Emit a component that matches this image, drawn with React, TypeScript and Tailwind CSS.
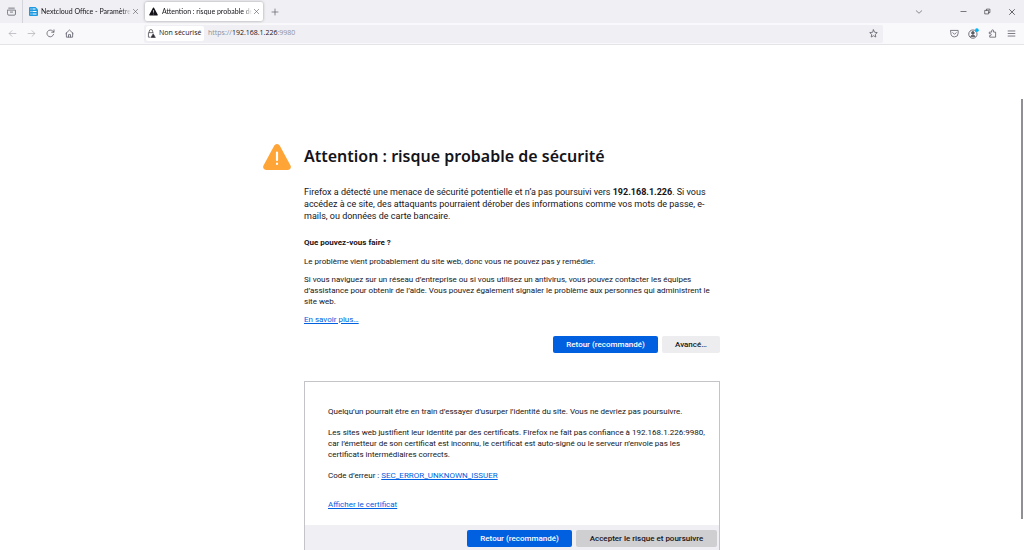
import type { ReactNode } from "react";

const iconPaths: Record<string, ReactNode> = {
  view: (
    <>
      <path d="M1 5.500h14v7a2 2 0 0 1-2 2H3a2 2 0 0 1-2-2z" />
      <path d="M3 2h10M6 9h4" />
    </>
  ),
  back: <path d="M14 8H2.500M7 3 2 8l5 5" />,
  forward: <path d="M2 8h11.500M9 3l5 5-5 5" />,
  reload: (
    <>
      <path d="M13.500 9.500A6 6 0 1 1 12 3.700L14 5.500" />
      <path d="M14.200 1.500v4.200H10" />
    </>
  ),
  home: (
    <>
      <path d="M1.500 8 8 1.800 14.500 8M2.500 7v7.500h11V7" />
      <path d="M6.200 14v-4h3.600v4" />
    </>
  ),
  plus: <path d="M8 2v12M2 8h12" />,
  close: <path d="m3 3 10 10M13 3 3 13" />,
  down: <path d="m2.500 5.500 5.500 5 5.500-5" />,
  minimize: <path d="M2 8h12" />,
  restore: (
    <>
      <path d="M2.500 5.500h8v8h-8z" />
      <path d="M5.500 5V2.500h8v8H11" />
    </>
  ),
  star: <path d="m8 1.500 2 4.300 4.700.6-3.500 3.200.9 4.700L8 12l-4.100 2.300.9-4.700L1.300 6.400 6 5.800z" />,
  pocket: (
    <>
      <path d="M1.500 2.500h13v5a6.500 6.500 0 0 1-13 0z" />
      <path d="m5 6.500 3 3 3-3" />
    </>
  ),
  puzzle: (
    <path d="M3 5.500h3.500V3.200a1.700 1.700 0 0 1 3.400 0v2.300h3.600v9H3v-3h1.200a1.600 1.600 0 0 0 0-3.200H3z" />
  ),
  menu: <path d="M2 3.500h12M2 8h12M2 12.500h12" />,
};

function Icon({ name, className = "size-[9px]" }: { name: string; className?: string }) {
  return (
    <svg
      viewBox="0 0 16 16"
      fill="none"
      stroke="currentColor"
      strokeWidth="1.4"
      strokeLinecap="round"
      strokeLinejoin="round"
      className={className}
    >
      {iconPaths[name]}
    </svg>
  );
}

function IconButton({ label, name, className }: { label: string; name: string; className?: string }) {
  return (
    <button aria-label={label} className="flex h-4 w-[19px] shrink-0 items-center justify-center">
      <Icon name={name} className={className} />
    </button>
  );
}

const tabTitle = "w-[90px] overflow-hidden whitespace-nowrap font-['Lato',sans-serif] text-[7px] mask-r-from-90%";

function TabStrip() {
  return (
    <div className="flex h-[23px] items-center bg-[#f0f0f4] text-[#5b5b66]">
      <div className="flex h-full w-[23px] items-center justify-center border-r border-[#d4d4dc]">
        <IconButton label="Firefox View" name="view" />
      </div>
      <div className="flex h-[19px] w-[118px] items-center pl-1.5">
        <svg viewBox="0 0 18 18" className="mr-[3px] size-[9px] shrink-0">
          <path d="M2 0h11l5 5v11a2 2 0 0 1-2 2H2a2 2 0 0 1-2-2V2a2 2 0 0 1 2-2z" fill="#1c99e0" />
          <path d="M3 3h2v2H3zM7 3h6v2H7zM3 8h2v2H3zM7 8h8v2H7zM3 13h2v2H3zM7 13h8v2H7z" fill="#fff" />
        </svg>
        <span className={`${tabTitle} text-[#15141a]`}>Nextcloud Office - Paramètres d</span>
        <button aria-label="Fermer l’onglet" className="flex w-2 shrink-0 justify-center">
          <Icon name="close" className="size-[7px]" />
        </button>
      </div>
      <div className="ml-1 flex h-[19px] w-[118px] items-center rounded-[2px] bg-white pl-1 shadow-[0_0_3px_rgba(0,0,0,0.35)]">
        <svg viewBox="0 0 16 16" className="mr-1 size-[9px] shrink-0">
          <path d="M8 1a1 1 0 0 1 .9.500l6.500 12A1 1 0 0 1 14.500 15h-13a1 1 0 0 1-.9-1.500l6.500-12A1 1 0 0 1 8 1z" fill="#15141a" />
          <path d="M8 5.500v4.500M8 12v1" stroke="#fff" strokeWidth="1.200" />
        </svg>
        <span className={`${tabTitle} text-[#15141a]`}>Attention : risque probable de s</span>
        <button aria-label="Fermer l’onglet" className="flex w-2 shrink-0 justify-center">
          <Icon name="close" className="size-[7px]" />
        </button>
      </div>
      <div className="ml-0.5">
        <IconButton label="Nouvel onglet" name="plus" className="size-2" />
      </div>
      <div className="mr-[26px] ml-auto">
        <IconButton label="Lister les onglets" name="down" className="size-2" />
      </div>
      <div className="flex gap-[5px] pr-[3px] text-[#2b2a33]">
        <IconButton label="Réduire" name="minimize" className="size-[7px]" />
        <IconButton label="Restaurer" name="restore" className="size-[7px]" />
        <IconButton label="Fermer" name="close" className="size-[8px]" />
      </div>
    </div>
  );
}

function NavBar() {
  return (
    <div className="flex h-[22px] items-center border-b border-[#e4e4e8] bg-[#f9f9fb] px-[3px] text-[#5b5b66]">
      <div className="flex text-[#b4b4ba]">
        <IconButton label="Précédent" name="back" />
        <IconButton label="Suivant" name="forward" />
      </div>
      <IconButton label="Actualiser" name="reload" />
      <IconButton label="Accueil" name="home" />
      <div className="mr-14 ml-[65px] flex h-[18px] grow items-center rounded-[2px] bg-[#f0f0f4]">
        <button className="ml-0.5 flex h-[15px] w-[58px] items-center gap-[3px] rounded-[2px] bg-white pl-px text-[7px] whitespace-nowrap text-[#15141a]">
          <svg viewBox="0 0 16 16" fill="none" stroke="#4a4a52" strokeWidth="1.400" className="size-[9px] shrink-0">
            <path d="M6 14.500H2.500v-8h9M4 6.500V4a3 3 0 0 1 6 0v2.500" />
            <path d="m11 8.500 3.800 6.500H7.200z" fill="#2b2a33" strokeLinejoin="round" />
          </svg>
          Non sécurisé
        </button>
        <a href="https://192.168.1.226:9980" className="ml-1 text-[7px] text-[#8f8f98]">
          https://<span className="text-[#15141a]">192.168.1.226</span>:9980
        </a>
        <div className="ml-auto">
          <IconButton label="Marquer cette page" name="star" />
        </div>
      </div>
      <div className="ml-1.5 flex">
        <IconButton label="Pocket" name="pocket" />
        <button aria-label="Compte" className="flex h-4 w-[19px] items-center justify-center">
          <svg viewBox="0 0 18 18" fill="none" stroke="currentColor" strokeWidth="1.400" className="size-[11px]">
            <circle cx="8" cy="10" r="6.800" />
            <circle cx="8" cy="8" r="2.200" fill="currentColor" />
            <path d="M4.500 14c0-3 7-3 7 0z" fill="currentColor" />
            <circle cx="14.500" cy="3.500" r="3" fill="#00b3f4" stroke="none" />
          </svg>
        </button>
        <IconButton label="Extensions" name="puzzle" />
        <IconButton label="Menu" name="menu" />
      </div>
    </div>
  );
}

const button = "h-[17px] rounded-[2px] text-[8px] font-medium whitespace-nowrap";
const link = "text-[#0060df] underline";

function CertificatePanel() {
  return (
    <section className="mt-7 border border-[#c4c4c8] text-[8px] leading-[11px] whitespace-nowrap">
      <div className="px-[23px] pt-6 pb-[15px]">
        <p>Quelqu’un pourrait être en train d’essayer d’usurper l’identité du site. Vous ne devriez pas poursuivre.</p>
        <p className="mt-2.5">
          Les sites web justifient leur identité par des certificats. Firefox ne fait pas confiance à 192.168.1.226:9980,
          <br />
          car l’émetteur de son certificat est inconnu, le certificat est auto-signé ou le serveur n’envoie pas les
          <br />
          certificats intermédiaires corrects.
        </p>
        <p className="mt-2.5">
          Code d’erreur : <a href="#code" className={link}>SEC_ERROR_UNKNOWN_ISSUER</a>
        </p>
        <p className="mt-[18px]">
          <a href="#certificat" className={link}>Afficher le certificat</a>
        </p>
      </div>
      <div className="flex justify-end gap-1 bg-[#f0f0f4] px-0.5 pt-[5px] pb-6">
        <button className={`${button} w-[105px] bg-[#0060df] text-white`}>Retour (recommandé)</button>
        <button className={`${button} w-[141px] bg-[#cfcfd2] text-[#15141a]`}>Accepter le risque et poursuivre</button>
      </div>
    </section>
  );
}

export default function App() {
  return (
    <div className="relative flex h-screen flex-col overflow-hidden bg-white font-['Open_Sans','Noto_Sans',sans-serif] text-[#15141a]">
      <header className="shrink-0">
        <TabStrip />
        <NavBar />
      </header>
      <main className="grid grid-cols-[1fr_416px_1fr] pt-[98px]">
        <div className="flex justify-end pt-px pr-[13px]">
          <svg viewBox="0 0 28 26" className="h-[26px] w-7">
            <path d="M14 0a3 3 0 0 1 2.700 1.600l10.800 20A3 3 0 0 1 24.900 26H3.100a3 3 0 0 1-2.600-4.400l10.800-20A3 3 0 0 1 14 0z" fill="#ffa436" />
            <path d="M14 8.500v7.500M14 19.500v.5" stroke="#fff" strokeWidth="2.200" strokeLinecap="round" />
          </svg>
        </div>
        <div className="font-['Roboto','Noto_Sans',sans-serif]">
          <h1 className="font-['Noto_Sans',sans-serif] text-[16px] leading-[26px] font-semibold whitespace-nowrap">
            Attention : risque probable de sécurité
          </h1>
          <p className="mt-[17px] text-[9px] leading-3 whitespace-nowrap">
            Firefox a détecté une menace de sécurité potentielle et n’a pas poursuivi vers <b>192.168.1.226</b>. Si vous
            <br />
            accédez à ce site, des attaquants pourraient dérober des informations comme vos mots de passe, e-
            <br />
            mails, ou données de carte bancaire.
          </p>
          <div className="mt-[15px] text-[8px] leading-[11px] whitespace-nowrap">
            <h2 className="font-bold">Que pouvez-vous faire ?</h2>
            <p className="mt-2">Le problème vient probablement du site web, donc vous ne pouvez pas y remédier.</p>
            <p className="mt-[7px]">
              Si vous naviguez sur un réseau d’entreprise ou si vous utilisez un antivirus, vous pouvez contacter les équipes
              <br />
              d’assistance pour obtenir de l’aide. Vous pouvez également signaler le problème aux personnes qui administrent le
              <br />
              site web.
            </p>
            <p className="mt-[7px]">
              <a href="#aide" className={link}>En savoir plus…</a>
            </p>
          </div>
          <div className="mt-[11px] flex justify-end gap-1">
            <button className={`${button} w-[105px] bg-[#0060df] text-white`}>Retour (recommandé)</button>
            <button className={`${button} w-[58px] bg-[#ededf0]`}>Avancé…</button>
          </div>
          <CertificatePanel />
        </div>
      </main>
      <div className="absolute top-[99px] right-px h-[420px] w-0.5 bg-[#8f8f94]" />
    </div>
  );
}
